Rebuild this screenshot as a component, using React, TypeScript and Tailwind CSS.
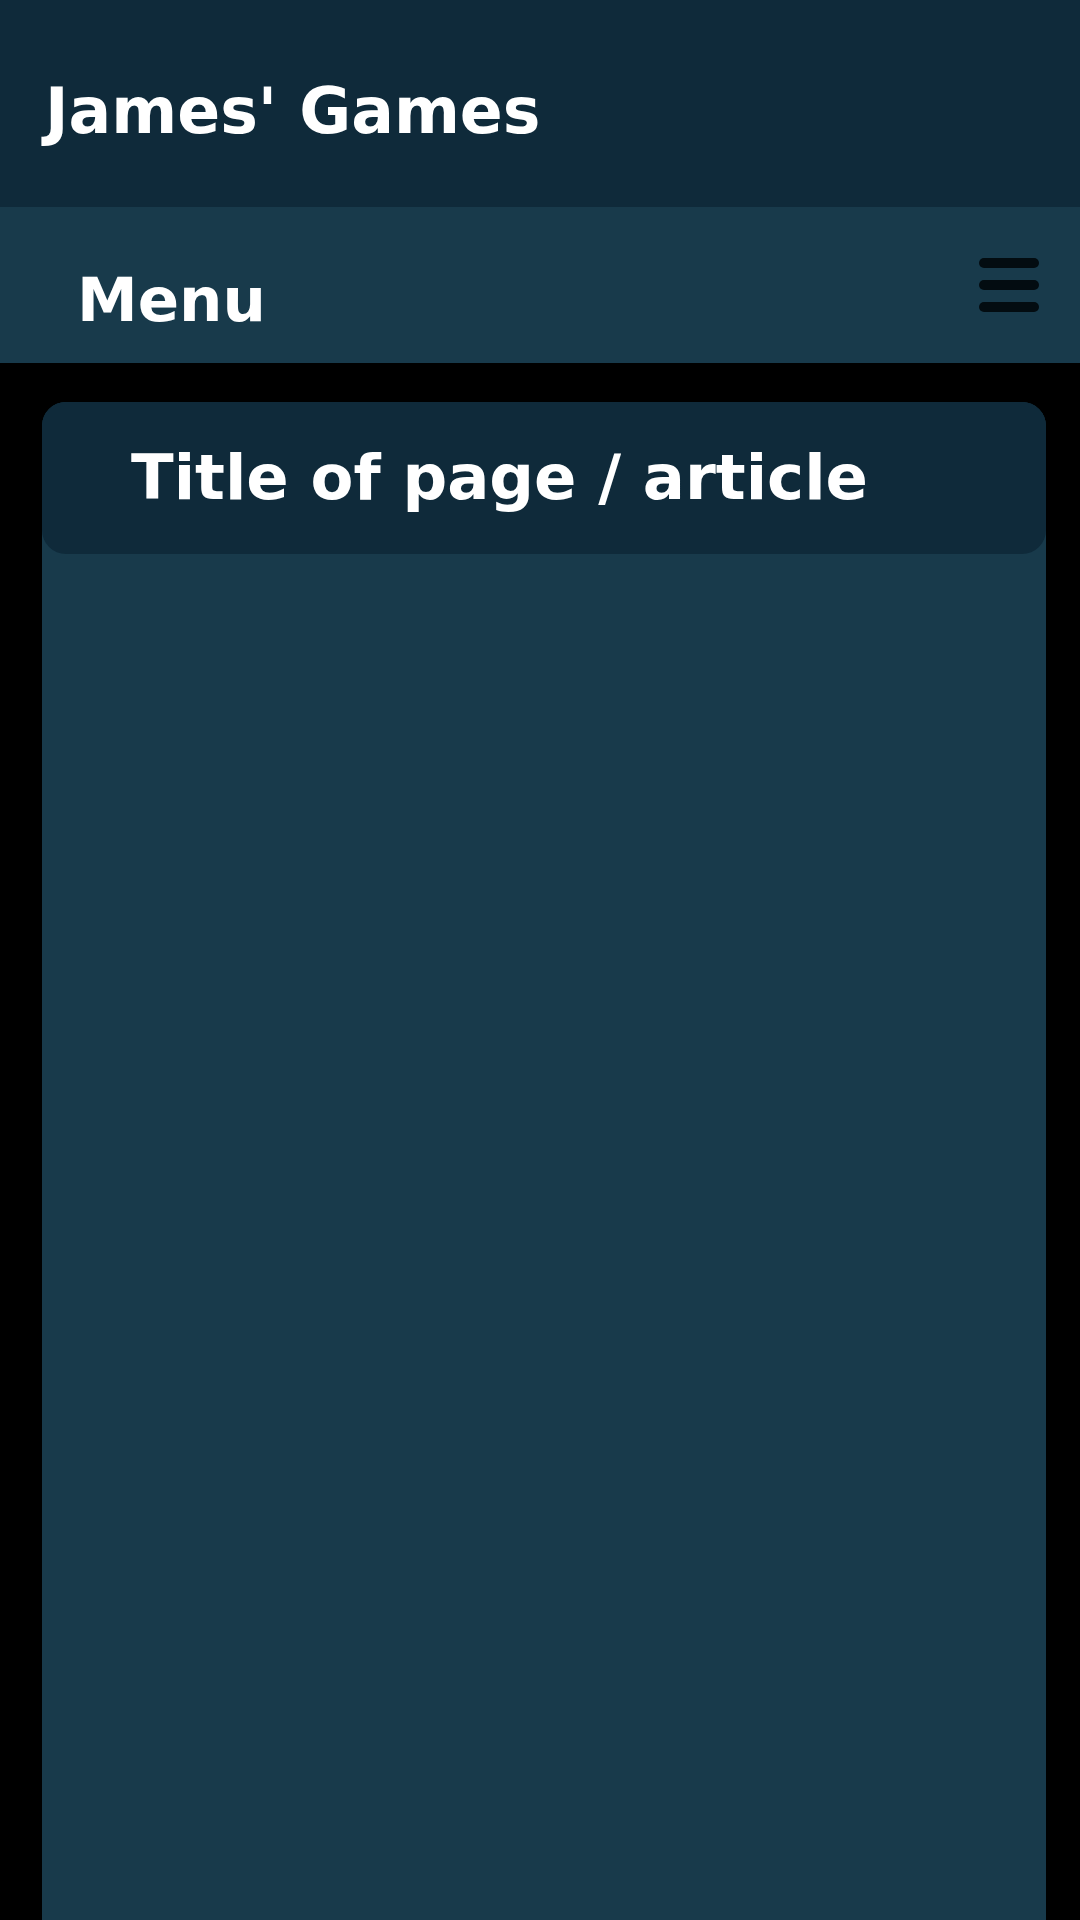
export default function App() {
  return (
    <div className="flex h-[1920px] flex-col overflow-hidden bg-black font-['DejaVu_Sans',sans-serif] font-bold text-white">
      <header className="h-[207px] shrink-0 bg-[#0f2a3a] pl-[45px] pt-[74px]">
        <h1 className="text-[63.3px] leading-[75px]">James' Games</h1>
      </header>
      <nav className="flex h-[156px] shrink-0 items-start justify-between bg-[#183a4b] pl-[77px] pr-[41px]">
        <h2 className="pt-[55px] text-[61px] leading-[75px]">Menu</h2>
        <div className="mt-[51px] flex w-[60px] flex-col gap-[12px]">
          <span className="h-[10px] rounded-full bg-[#030c11]" />
          <span className="h-[10px] rounded-full bg-[#030c11]" />
          <span className="h-[10px] rounded-full bg-[#030c11]" />
        </div>
      </nav>
      <main className="ml-[42px] mr-[34px] mt-[39px] flex flex-1 flex-col rounded-t-[24px] bg-[#183a4b]">
        <div className="h-[152px] rounded-[24px] bg-[#0f2a3a] pl-[89px] pt-[38px]">
          <h3 className="text-[62.5px] leading-[75px]">Title of page / article</h3>
        </div>
      </main>
    </div>
  );
}
